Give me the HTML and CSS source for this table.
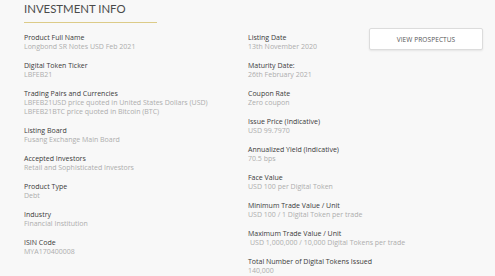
FILE: index.html
```html
<!DOCTYPE html>
<html>
<head>
<meta charset="utf-8">
<link rel="stylesheet" href="styles.css">
</head>
<body>
<section class="info">
  <header class="info-head">
    <h1 class="info-title">INVESTMENT INFO</h1>
  </header>
  <div class="info-body">
    <dl class="info-list">
      <div class="item"><dt>Product Full Name</dt><dd>Longbond SR Notes USD Feb 2021</dd></div>
      <div class="item"><dt>Digital Token Ticker</dt><dd>LBFEB21</dd></div>
      <div class="item"><dt>Trading Pairs and Currencies</dt><dd>LBFEB21USD price quoted in United States Dollars (USD)</dd><dd>LBFEB21BTC price quoted in Bitcoin (BTC)</dd></div>
      <div class="item"><dt>Listing Board</dt><dd>Fusang Exchange Main Board</dd></div>
      <div class="item"><dt>Accepted Investors</dt><dd>Retail and Sophisticated Investors</dd></div>
      <div class="item"><dt>Product Type</dt><dd>Debt</dd></div>
      <div class="item"><dt>Industry</dt><dd>Financial Institution</dd></div>
      <div class="item"><dt>ISIN Code</dt><dd>MYA170400008</dd></div>
    </dl>
    <dl class="info-list">
      <div class="item"><dt>Listing Date</dt><dd>13th November 2020</dd></div>
      <div class="item"><dt>Maturity Date:</dt><dd>26th February 2021</dd></div>
      <div class="item"><dt>Coupon Rate</dt><dd>Zero coupon</dd></div>
      <div class="item"><dt>Issue Price (Indicative)</dt><dd>USD 99.7970</dd></div>
      <div class="item"><dt>Annualized Yield (Indicative)</dt><dd>70.5 bps</dd></div>
      <div class="item"><dt>Face Value</dt><dd>USD 100 per Digital Token</dd></div>
      <div class="item"><dt>Minimum Trade Value / Unit</dt><dd>USD 100 / 1 Digital Token per trade</dd></div>
      <div class="item"><dt>Maximum Trade Value / Unit</dt><dd class="indent">USD 1,000,000 / 10,000 Digital Tokens per trade</dd></div>
      <div class="item"><dt>Total Number of Digital Tokens Issued</dt><dd>140,000</dd></div>
    </dl>
    <div class="actions">
      <button class="btn">VIEW PROSPECTUS</button>
    </div>
  </div>
</section>
</body>
</html>
```

FILE: styles.css
```css
html, body {
  margin: 0;
  padding: 0;
  background: #f8f8f8;
}
body {
  font-family: "Open Sans", "Liberation Sans", sans-serif;
  color: #333;
}
.info {
  padding-left: 24px;
}
.info-head {
  width: 133px;
  border-bottom: 1px solid #dccb88;
  padding-bottom: 5px;
}
.info-title {
  margin: 0;
  font-family: "Lato", "Open Sans", sans-serif;
  font-weight: 400;
  font-size: 11.4px;
  line-height: 17px;
  color: #4a4a4a;
  letter-spacing: 0;
}
.info-body {
  display: grid;
  grid-template-columns: 224px 121px 114px;
  margin-top: 5px;
}
.info-list {
  margin: 0;
  padding-top: 5px;
  display: flex;
  flex-direction: column;
  gap: 10px;
}
.item dt {
  font-size: 7px;
  line-height: 9px;
  font-weight: 500;
  color: #3a3a3a;
  white-space: nowrap;
}
.item dd {
  margin: 0;
  font-size: 7px;
  line-height: 9px;
  color: #adadad;
  white-space: nowrap;
}
.item dd.indent {
  padding-left: 2px;
}
.actions {
  display: flex;
  align-items: flex-start;
}
.btn {
  width: 114px;
  height: 22px;
  background: #fff;
  border: 1px solid #dcdcdc;
  border-radius: 2px;
  box-shadow: 0 1px 2px rgba(0,0,0,0.08);
  font-family: "Open Sans", sans-serif;
  font-size: 6.5px;
  color: #555;
  padding: 0;
  letter-spacing: 0.1px;
}
```
